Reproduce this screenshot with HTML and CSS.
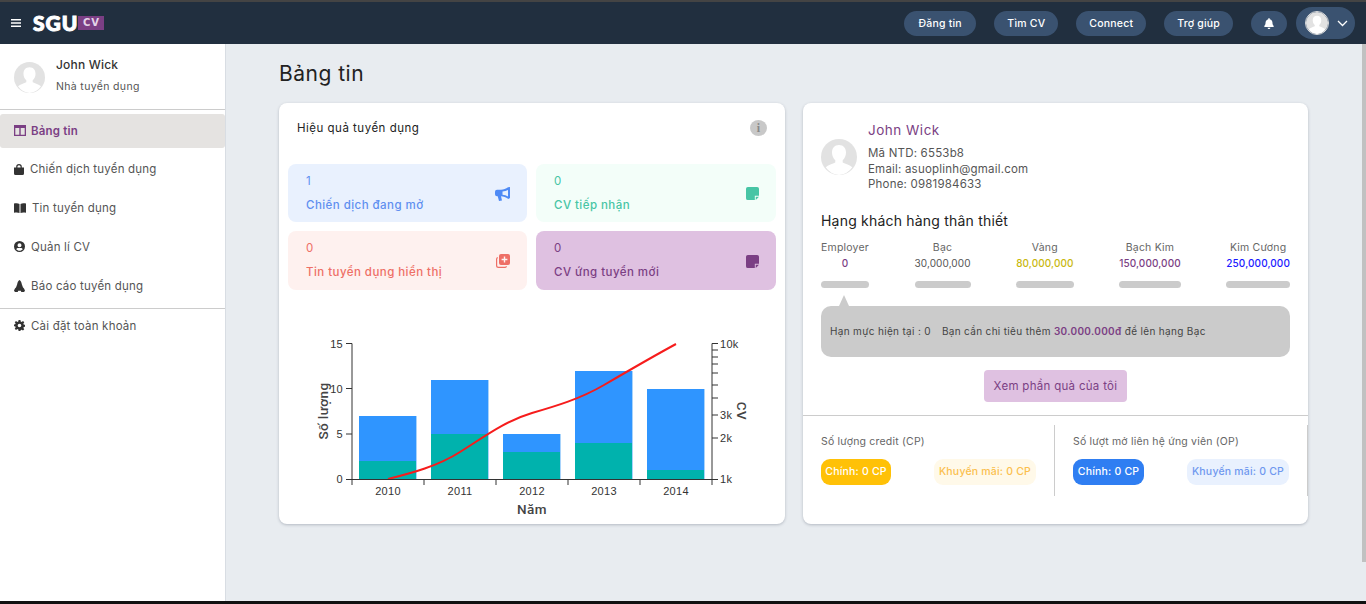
FILE: index.html
```html
<!DOCTYPE html>
<html lang="vi">
<head>
  <meta charset="UTF-8" />
  <title>Bảng tin</title>
  <link rel="stylesheet" href="styles.css">
</head>
<body>

  <header class="topbar">
    <div class="brand">
      <svg class="burger" width="10" height="8" viewBox="0 0 10 8"><path d="M0 .75h10M0 4h10M0 7.25h10" stroke="#fff" stroke-width="1.4"/></svg>
      <span class="logo">SGU</span><span class="logo-cv">CV</span>
    </div>
    <nav class="top-actions">
      <a class="pill pill-post">Đăng tin</a>
      <a class="pill">Tìm CV</a>
      <a class="pill">Connect</a>
      <a class="pill">Trợ giúp</a>
      <a class="pill pill-bell">
        <svg width="10" height="11" viewBox="0 0 448 512"><path fill="#fff" d="M224 512c35 0 64-29 64-64H160c0 35 29 64 64 64zm215-150c-19-21-55-52-55-154 0-78-54-140-128-155V32a32 32 0 0 0-64 0v21C118 68 64 130 64 208c0 102-36 133-55 154-6 6-9 14-9 22 0 16 13 32 32 32h384c19 0 32-16 32-32 0-8-3-16-9-22z"/></svg>
      </a>
      <a class="pill pill-user">
        <svg class="avatar" width="24" height="24" viewBox="0 0 36 36"><use href="#person"/></svg>
        <svg width="11" height="7" viewBox="0 0 11 7"><path d="M1 1l4.5 4.5L10 1" fill="none" stroke="#fff" stroke-width="1.3"/></svg>
      </a>
    </nav>
  </header>

  <svg class="defs" width="0" height="0">
    <symbol id="person" viewBox="0 0 36 36">
      <circle cx="18" cy="18" r="18" fill="#e2e2e2"/>
      <path fill="#fff" d="M18 6c-4.600 0-7 3.400-7 7.500 0 3 1.200 6 3.300 7.800v2.200c-2.500 1.300-7.300 2.500-9.600 4.700A18 18 0 0 0 18 36a18 18 0 0 0 13.300-7.800c-2.300-2.200-7.100-3.400-9.600-4.700v-2.200c2.100-1.800 3.300-4.800 3.300-7.800C25 9.400 22.600 6 18 6z"/>
    </symbol>
    <symbol id="note" viewBox="0 0 14 14">
      <path d="M2 0h10a2 2 0 0 1 2 2v7.500H9.500V14H2a2 2 0 0 1-2-2V2a2 2 0 0 1 2-2zM10.500 14v-3.500H14z"/>
    </symbol>
  </svg>

  <div class="layout">
    <aside class="sidebar">
      <div class="profile">
        <svg width="31" height="31"><use href="#person"/></svg>
        <div>
          <div class="profile-name">John Wick</div>
          <div class="profile-role">Nhà tuyển dụng</div>
        </div>
      </div>
      <ul class="menu">
        <li class="menu-item active">
          <svg width="12" height="11" viewBox="0 0 12 11"><path fill="currentColor" d="M0 0h12v11H0zm1.300 3v6.700h4V3zm5.400 0v6.700h4V3z"/></svg>
          Bảng tin
        </li>
        <li class="menu-item">
          <svg width="10" height="11" viewBox="0 0 10 11"><path fill="currentColor" fill-rule="evenodd" d="M2.200 3.500V2.800a2.800 2.800 0 0 1 5.600 0v.7H10v6a1.500 1.500 0 0 1-1.500 1.500h-7A1.500 1.500 0 0 1 0 9.500v-6zm1.200 0h3.200v-.7a1.600 1.600 0 0 0-3.200 0z"/></svg>
          Chiến dịch tuyển dụng
        </li>
        <li class="menu-item">
          <svg width="12" height="10" viewBox="0 0 12 10"><path fill="currentColor" d="M0 .6C1.800 0 4 0 5.500 1v9C4 9.300 1.800 9.300 0 9.800zM12 .6C10.200 0 8 0 6.500 1v9c1.500-.7 3.700-.7 5.500-.2z"/></svg>
          Tin tuyển dụng
        </li>
        <li class="menu-item">
          <svg width="11" height="11" viewBox="0 0 11 11"><path fill="currentColor" fill-rule="evenodd" d="M5.500 0a5.500 5.500 0 1 1 0 11 5.500 5.500 0 0 1 0-11zm0 2.200a2 2 0 1 0 0 4 2 2 0 0 0 0-4zm0 7.500c1.300 0 2.500-.6 3.300-1.500-.4-.8-1.200-1.300-2-1.300-.4 0-.8.200-1.300.2s-.9-.2-1.300-.2c-.8 0-1.600.5-2 1.300.8.900 2 1.500 3.300 1.500z"/></svg>
          Quản lí CV
        </li>
        <li class="menu-item">
          <svg width="11" height="12" viewBox="0 0 11 12"><path fill="currentColor" d="M5.500 0C6.800 1 7.600 2.600 7.800 4.200L9 7.500c.8.500 1.600 1.800 2 3.300l-1 1.200H7.300l-.5-1.200H4.200L3.700 12H1L0 10.800c.4-1.500 1.200-2.800 2-3.300l1.200-3.300C3.400 2.600 4.200 1 5.500 0z"/></svg>
          Báo cáo tuyển dụng
        </li>
      </ul>
      <div class="menu-bottom">
        <div class="menu-item">
          <svg width="11" height="11" viewBox="0 0 24 24"><path fill="currentColor" fill-rule="evenodd" d="M10 0h4l.6 3.300 2.200.9L19.600 2.300l2.800 2.800-1.900 2.800.9 2.200 2.600.5v4l-2.600.5-.9 2.200 1.900 2.800-2.800 2.800-2.800-1.900-2.200.9L14 24h-4l-.6-3.300-2.200-.9-2.800 1.900-2.800-2.800 1.900-2.800-.9-2.200L0 13.900v-4l2.600-.5.9-2.200L1.600 5.100l2.800-2.800 2.800 1.900 2.200-.9zm2 8a4 4 0 1 0 0 8 4 4 0 0 0 0-8z"/></svg>
          Cài đặt toàn khoản
        </div>
      </div>
    </aside>

    <main class="content">
      <h1>Bảng tin</h1>
      <div class="cards">

        <section class="card card-left">
          <div class="card-head">
            <span>Hiệu quả tuyển dụng</span>
            <span class="info">i</span>
          </div>
          <div class="stats">
            <div class="stat stat-blue">
              <div>
                <div class="stat-num">1</div>
                <div class="stat-label">Chiến dịch đang mở</div>
              </div>
              <svg width="15" height="14" viewBox="0 0 15 14"><path fill="currentColor" d="M15 0v11l-1.600 1-.4-.2C11 10.500 8.500 9.500 6 9.300l1 4.200-3 .5-1.300-4.700H2a2 2 0 0 1-2-2V4.700a2 2 0 0 1 2-2h4c2.500 0 5-1 7-2.500zM13 2.900C11.400 3.800 9.500 4.400 7.500 4.600v3.200c2 .2 3.900.8 5.500 1.700z"/></svg>
            </div>
            <div class="stat stat-green">
              <div>
                <div class="stat-num">0</div>
                <div class="stat-label">CV tiếp nhận</div>
              </div>
              <svg class="note-icon" width="13" height="13"><use href="#note"/></svg>
            </div>
            <div class="stat stat-red">
              <div>
                <div class="stat-num">0</div>
                <div class="stat-label">Tin tuyển dụng hiển thị</div>
              </div>
              <svg width="14" height="14" viewBox="0 0 14 14"><path fill="currentColor" fill-rule="evenodd" d="M5 0h7a2 2 0 0 1 2 2v7a2 2 0 0 1-2 2H5a2 2 0 0 1-2-2V2a2 2 0 0 1 2-2zm2.800 2.500v2.200H5.600v1.600h2.200v2.200h1.400V6.300h2.200V4.700H9.200V2.500z"/><path fill="none" stroke="currentColor" stroke-width="1.200" d="M1.800 3.500A1.800 1.800 0 0 0 .6 5.200v6.300c0 1 .9 1.900 1.900 1.900h6.300c.8 0 1.400-.5 1.700-1.200"/></svg>
            </div>
            <div class="stat stat-purple">
              <div>
                <div class="stat-num">0</div>
                <div class="stat-label">CV ứng tuyển mới</div>
              </div>
              <svg class="note-icon" width="13" height="13"><use href="#note"/></svg>
            </div>
          </div>

          <svg class="chart" width="460" height="195" viewBox="0 0 460 195">
            <!-- bars -->
            <g fill="#2f95ff">
              <rect x="59" y="86" width="58" height="63"/>
              <rect x="131" y="50" width="58" height="99"/>
              <rect x="203" y="104" width="58" height="45"/>
              <rect x="275" y="41" width="58" height="108"/>
              <rect x="347" y="59" width="58" height="90"/>
            </g>
            <g fill="#00b2ad">
              <rect x="59" y="131" width="58" height="18"/>
              <rect x="131" y="104" width="58" height="45"/>
              <rect x="203" y="122" width="58" height="27"/>
              <rect x="275" y="113" width="58" height="36"/>
              <rect x="347" y="140" width="58" height="9"/>
            </g>
            <!-- light right edge of each bar -->
            <g fill="#a8d3fb">
              <rect x="116" y="86" width="1" height="63"/>
              <rect x="188" y="50" width="1" height="99"/>
              <rect x="260" y="104" width="1" height="45"/>
              <rect x="332" y="41" width="1" height="108"/>
              <rect x="404" y="59" width="1" height="90"/>
            </g>
            <path d="M88 149C112 143 138 136 160 122C184 107 205 91 232 83C256 76 280 69 304 55C328 41 352 27 376 14" fill="none" stroke="#f61c1c" stroke-width="2"/>
            <!-- axes -->
            <g fill="none" stroke="#333" stroke-width="1">
              <path d="M46 13.500h6V149.500H46M46 58.500h6M46 104h6"/>
              <path d="M52 149.500H412M52 149.500v5.500M124 149.500v5.500M196 149.500v5.500M268 149.500v5.500M340 149.500v5.500M412 149.500v5.500"/>
              <path d="M412 149.500V13.500h6M412 20h6M412 27h6M412 34h6M412 43h6M412 55h6M412 68h6M412 85h6M412 108h6M412 149.500h6"/>
            </g>
            <g class="tick">
              <text x="43" y="18" text-anchor="end">15</text>
              <text x="43" y="63" text-anchor="end">10</text>
              <text x="43" y="108" text-anchor="end">5</text>
              <text x="43" y="153" text-anchor="end">0</text>
              <text x="88" y="165" text-anchor="middle">2010</text>
              <text x="160" y="165" text-anchor="middle">2011</text>
              <text x="232" y="165" text-anchor="middle">2012</text>
              <text x="304" y="165" text-anchor="middle">2013</text>
              <text x="376" y="165" text-anchor="middle">2014</text>
              <text x="420" y="18">10k</text>
              <text x="420" y="89">3k</text>
              <text x="420" y="112">2k</text>
              <text x="420" y="153">1k</text>
            </g>
            <g class="axis-title">
              <text x="232" y="184" text-anchor="middle">Năm</text>
              <text transform="translate(28 81) rotate(-90)" text-anchor="middle">Số lượng</text>
              <text transform="translate(437 81) rotate(90)" text-anchor="middle">CV</text>
            </g>
          </svg>
        </section>

        <section class="card card-right">
          <div class="card-body">
            <div class="emp">
              <svg width="36" height="36"><use href="#person"/></svg>
              <div>
                <div class="emp-name">John Wick</div>
                <div class="emp-line">Mã NTD: 6553b8</div>
                <div class="emp-line">Email: asuoplinh@gmail.com</div>
                <div class="emp-line">Phone: 0981984633</div>
              </div>
            </div>
            <h2>Hạng khách hàng thân thiết</h2>
            <div class="tiers">
              <div class="tier"><div>Employer</div><b class="c-purple">0</b><i></i></div>
              <div class="tier"><div>Bạc</div><b class="c-silver">30,000,000</b><i></i></div>
              <div class="tier"><div>Vàng</div><b class="c-gold">80,000,000</b><i></i></div>
              <div class="tier"><div>Bạch Kim</div><b class="c-purple">150,000,000</b><i></i></div>
              <div class="tier"><div>Kim Cương</div><b class="c-blue">250,000,000</b><i></i></div>
            </div>
            <div class="arrow"></div>
            <div class="limit">
              <span>Hạn mực hiện tại : 0</span>
              <span>Bạn cần chi tiêu thêm <b>30.000.000đ</b> để lên hạng Bạc</span>
            </div>
            <div class="gift-row"><a class="gift">Xem phần quà của tôi</a></div>
          </div>
          <div class="credits">
            <div class="credit">
              <div class="credit-label">Số lượng credit (CP)</div>
              <div class="chips">
                <span class="chip chip-yellow">Chính: 0 CP</span>
                <span class="chip chip-yellow-soft">Khuyến mãi: 0 CP</span>
              </div>
            </div>
            <div class="credit credit-op">
              <div class="credit-label">Số lượt mở liên hệ ứng viên (OP)</div>
              <div class="chips">
                <span class="chip chip-blue">Chính: 0 CP</span>
                <span class="chip chip-blue-soft">Khuyến mãi: 0 CP</span>
              </div>
            </div>
          </div>
        </section>

      </div>
    </main>

    <div class="scroll-track"><div class="scroll-thumb"></div></div>
  </div>

</body>
</html>
```

FILE: styles.css
```css
* {
  box-sizing: border-box;
}

html, body {
  height: 100%;
}

body {
  margin: 0;
  display: flex;
  flex-direction: column;
  font-family: Inter, "Liberation Sans", sans-serif;
  font-size: 11.5px;
  letter-spacing: 0.2px;
  color: #444;
  background-color: #e8ecf0;
  border-bottom: 3px solid #111;
}

.defs {
  position: absolute;
}

/* top bar */
.topbar {
  flex: none;
  height: 44px;
  display: flex;
  align-items: center;
  justify-content: space-between;
  padding-right: 11px;
  background-color: #212f3f;
  border-top: 2px solid #444;
}

.brand {
  display: flex;
  align-items: center;
  padding-left: 11px;
}

.burger {
  margin-right: 12px;
}

.logo {
  font-family: "Lato", sans-serif;
  font-weight: 900;
  font-size: 21px;
  line-height: 20px;
  letter-spacing: 1px;
  color: #fff;
  -webkit-text-stroke: 1px #fff;
}

.logo-cv {
  width: 26px;
  height: 14px;
  line-height: 14px;
  text-align: center;
  font-family: "DejaVu Sans", sans-serif;
  font-weight: bold;
  font-size: 10px;
  letter-spacing: 1px;
  color: #e4d4e8;
  background-color: #7b3f84;
}

.top-actions {
  display: flex;
  align-items: center;
  gap: 18px;
}

.pill {
  height: 25px;
  padding: 0 13px;
  display: flex;
  align-items: center;
  gap: 8px;
  border-radius: 13px;
  font-weight: 500;
  font-size: 10.5px;
  color: #fff;
  background-color: #3a5270;
}

.pill-post {
  padding: 0 14.5px;
}

.pill-bell {
  width: 36px;
  padding: 0;
  justify-content: center;
}

.pill-user {
  width: 59px;
  height: 32px;
  margin-left: -9px;
  padding: 0 0 0 9px;
  border-radius: 16px;
}

.avatar {
  border: 1px solid #ddd;
  border-radius: 50%;
}

/* layout */
.layout {
  flex: 1;
  min-height: 0;
  display: flex;
}

.sidebar {
  flex: none;
  width: 226px;
  background-color: #fff;
  border-right: 1px solid #d8dde3;
}

.profile {
  height: 66px;
  display: flex;
  align-items: center;
  gap: 11px;
  padding: 1px 14px 0;
  border-bottom: 1px solid #ccc;
}

.profile > div {
  padding-bottom: 4px;
}

.profile-name {
  font-weight: 500;
  font-size: 12px;
  color: #333;
}

.profile-role {
  margin-top: 8px;
  font-size: 10.5px;
  letter-spacing: 0.35px;
  color: #555;
}

.menu {
  list-style: none;
  margin: 0;
  padding: 4px 0 3px;
  border-bottom: 1px solid #ccc;
}

.menu-item {
  height: 38.75px;
  display: flex;
  align-items: center;
  gap: 6px;
  padding-left: 14px;
  color: #555;
}

.menu-item svg {
  color: #333;
}

.menu-item.active {
  height: 34px;
  margin-bottom: 2px;
  padding-bottom: 1px;
  gap: 5px;
  border-radius: 3px;
  font-weight: 600;
  color: #7b3f84;
  background-color: #e5e3e1;
}

.menu-item.active svg {
  color: #7b3f84;
}

.menu-bottom .menu-item {
  height: 33px;
}

/* main */
.content {
  flex: 1;
  min-width: 0;
  padding: 16px 54px 0 53px;
}

h1 {
  margin: 0;
  height: 43px;
  line-height: 28px;
  font-weight: 400;
  font-size: 21px;
  letter-spacing: 0.5px;
  color: #222;
}

.cards {
  display: grid;
  grid-template-columns: 506px 505px;
  gap: 18px;
}

.card {
  height: 421px;
  border-radius: 8px;
  background-color: #fff;
  box-shadow: 0 1px 3px rgba(60, 70, 90, 0.3);
}

/* left card */
.card-left {
  padding: 0 9px;
}

.card-head {
  height: 61px;
  display: flex;
  align-items: center;
  justify-content: space-between;
  padding: 0 9px 11px 9px;
  letter-spacing: 0.5px;
  color: #222;
}

.info {
  width: 17px;
  height: 16px;
  border-radius: 50%;
  text-align: center;
  line-height: 16px;
  font-family: "Liberation Serif", serif;
  font-weight: bold;
  font-size: 12px;
  letter-spacing: 0;
  color: #888;
  background-color: #c8c8c8;
}

.stats {
  display: grid;
  grid-template-columns: 239px 240px;
  grid-template-rows: 58px 59px;
  gap: 9px;
}

.stat {
  display: flex;
  align-items: center;
  justify-content: space-between;
  padding: 0 17px 1px 18px;
  border-radius: 8px;
}

.stat > svg {
  margin-top: 2px;
}

.stat-num {
  margin-bottom: 10px;
}

.stat-label {
  font-weight: 500;
  letter-spacing: 0.45px;
}

.stat-blue {
  color: #5f8ff0;
  background-color: #e9f1fe;
}

.stat-blue > svg {
  color: #4f8af5;
}

.stat-green {
  color: #47c5a5;
  background-color: #f3fef9;
}

.stat-red {
  color: #ee6f66;
  background-color: #fef1ef;
}

.stat-purple {
  color: #7b3f84;
  background-color: #dfc1e1;
}

.note-icon {
  fill: currentColor;
}

.chart {
  display: block;
  margin: 40px 0 0 12px;
}

.tick text {
  font-family: "Liberation Sans", sans-serif;
  font-size: 11px;
  letter-spacing: 0.3px;
  fill: #333;
}

.axis-title text {
  font-family: Roboto, sans-serif;
  font-weight: 500;
  font-size: 13.5px;
  letter-spacing: 0.4px;
  fill: #444;
}

/* right card */
.card-body {
  height: 312px;
  padding: 19px 18px 0;
}

.emp {
  display: flex;
  align-items: center;
  gap: 11px;
}

.emp-name {
  margin-bottom: 8px;
  font-size: 13.5px;
  letter-spacing: 0.5px;
  color: #7b3f84;
}

.emp-line {
  line-height: 15.5px;
  color: #555;
}

h2 {
  margin: 19px 0 0;
  line-height: 18px;
  font-weight: 400;
  font-size: 14px;
  letter-spacing: 0.2px;
  color: #222;
}

.tiers {
  display: flex;
  justify-content: space-between;
  margin-top: 11px;
  text-align: center;
  font-size: 10.5px;
  color: #666;
}

.tier b {
  display: block;
  margin-top: 3px;
  font-weight: 500;
  font-size: 10px;
  line-height: 13px;
  letter-spacing: 0.1px;
}

.tier i {
  display: block;
  height: 7px;
  margin-top: 11px;
  border-radius: 4px;
  background-color: #cbcbcb;
}

.tier b.c-silver {
  font-weight: 400;
  color: #555;
}

.c-purple {
  color: #7b3f84;
}

.c-gold {
  color: #c9b80f;
}

.c-blue {
  color: #1a1aff;
}

.arrow {
  width: 0;
  height: 0;
  margin: 7px 0 0 18px;
  border-left: 5px solid transparent;
  border-right: 5px solid transparent;
  border-bottom: 11px solid #cbcbcb;
}

.limit {
  height: 51px;
  display: flex;
  align-items: center;
  gap: 11px;
  padding: 0 9px;
  border-radius: 10px;
  font-size: 10px;
  letter-spacing: 0.33px;
  background-color: #cbcbcb;
}

.limit b {
  font-weight: 600;
  color: #7b3f84;
}

.gift-row {
  display: flex;
  justify-content: center;
  margin-top: 13px;
}

.gift {
  width: 143px;
  height: 32px;
  line-height: 32px;
  text-align: center;
  border-radius: 4px;
  letter-spacing: 0.3px;
  color: #7b3f84;
  background-color: #dfc1e1;
}

.credits {
  display: grid;
  grid-template-columns: 252px 253px;
  padding-top: 9px;
  border-top: 1px solid #ccc;
}

.credit {
  height: 71px;
  padding: 0 18px;
  font-size: 10.5px;
  border-right: 1px solid #ccc;
}

.credit-label {
  height: 34px;
  line-height: 33px;
  color: #666;
}

.chips {
  display: flex;
  align-items: center;
  justify-content: space-between;
}

.chip {
  height: 26px;
  line-height: 26px;
  border-radius: 9px;
  font-weight: 500;
  font-size: 10.5px;
  text-align: center;
  white-space: nowrap;
}

.chip-yellow {
  width: 70px;
  color: #fff;
  background-color: #ffc107;
}

.chip-yellow-soft {
  width: 102px;
  color: #fbbf4e;
  background-color: #fff9e9;
}

.chip-blue {
  width: 71px;
  color: #fff;
  background-color: #2f7ef2;
}

.chip-blue-soft {
  width: 102px;
  color: #6f98ef;
  background-color: #e9f1fe;
}

/* page scrollbar */
.scroll-track {
  flex: none;
  width: 4px;
}

.scroll-thumb {
  height: 518px;
  background-color: #c1c1c1;
}
```
